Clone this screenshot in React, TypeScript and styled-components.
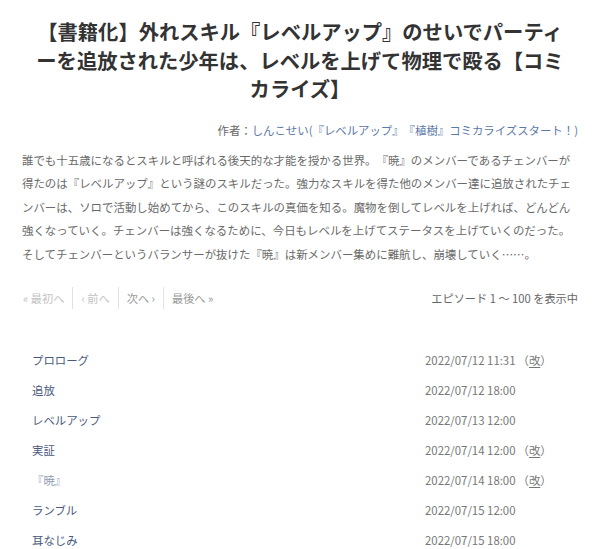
import React from 'react';
import styled, {createGlobalStyle} from "styled-components";

const GlobalStyle = createGlobalStyle`
    html, body {
        margin: 0;
        padding: 0;
        background: #fff;
    }
    body {
        font-family: "Noto Sans CJK JP", "Noto Sans", sans-serif;
        color: #666;
        text-spacing-trim: space-all;
    }
`;

interface Episode {
    title: string;
    date: string;
    revised?: boolean;
    visited?: boolean;
}

const episodes: Episode[] = [
    {title: "プロローグ", date: "2022/07/12 11:31", revised: true},
    {title: "追放", date: "2022/07/12 18:00"},
    {title: "レベルアップ", date: "2022/07/13 12:00"},
    {title: "実証", date: "2022/07/14 12:00", revised: true},
    {title: "『暁』", date: "2022/07/14 18:00", revised: true, visited: true},
    {title: "ランブル", date: "2022/07/15 12:00"},
    {title: "耳なじみ", date: "2022/07/15 18:00"},
];

const pager = [
    {label: "« 最初へ", active: false},
    {label: "‹ 前へ", active: false},
    {label: "次へ ›", active: true},
    {label: "最後へ »", active: true},
];

const Page = styled.div`
    width: 600px;
    box-sizing: border-box;
    padding: 17px 22px 0;
`;

const Title = styled.h1`
    margin: 0;
    padding: 0 10px;
    font-size: 20.3px;
    line-height: 28.5px;
    font-weight: 700;
    color: #333;
    text-align: center;
`;

const Author = styled.div`
    margin-top: 17px;
    text-align: right;
    font-size: 11.4px;
    line-height: 20px;
    color: #666;
`;

const AuthorLink = styled.a`
    color: #5b78a6;
    text-decoration: none;
`;

const Summary = styled.p`
    margin: 9px 0 0;
    font-size: 11.45px;
    line-height: 23.5px;
    color: #6a6a6a;
`;

const PagerBar = styled.div`
    margin-top: 21px;
    display: flex;
    align-items: center;
    justify-content: space-between;
`;

const PagerLinks = styled.div`
    display: flex;
    align-items: center;
`;

const PagerItem = styled.a<{$active: boolean}>`
    font-size: 11.2px;
    line-height: 22px;
    padding: 0 8px;
    color: ${p => p.$active ? "#999" : "#c2c2c2"};
    text-decoration: none;
    &:first-child {
        padding-left: 1px;
    }
    & + & {
        border-left: 1px solid #e2e2e2;
    }
`;

const Count = styled.div`
    font-size: 11.2px;
    line-height: 22px;
    color: #666;
`;

const List = styled.div`
    margin-top: 36px;
`;

const Row = styled.div`
    display: grid;
    grid-template-columns: 1fr 153px;
    align-items: center;
    height: 30px;
`;

const EpisodeTitle = styled.a<{$visited?: boolean}>`
    padding-left: 10px;
    font-size: 11.4px;
    color: ${p => p.$visited ? "#8d9ab3" : "#4a5a7c"};
    text-decoration: none;
`;

const Date = styled.div`
    font-size: 11.4px;
    color: #777;
`;

const Revised = styled.span`
    margin-left: 2px;
    & u {
        text-decoration: underline;
        text-underline-offset: 2px;
    }
`;

export default function App() {
    return (
        <Page>
            <GlobalStyle/>
            <Title>【書籍化】外れスキル『レベルアップ』のせいでパーティーを追放された少年は、レベルを上げて物理で殴る【コミカライズ】</Title>
            <Author>
                作者：<AuthorLink href="#">しんこせい(『レベルアップ』『植樹』コミカライズスタート！)</AuthorLink>
            </Author>
            <Summary>
                誰でも十五歳になるとスキルと呼ばれる後天的な才能を授かる世界。『暁』のメンバーであるチェンバーが得たのは『レベルアップ』という謎のスキルだった。強力なスキルを得た他のメンバー達に追放されたチェンバーは、ソロで活動し始めてから、このスキルの真価を知る。魔物を倒してレベルを上げれば、どんどん強くなっていく。チェンバーは強くなるために、今日もレベルを上げてステータスを上げていくのだった。<br/>
                そしてチェンバーというバランサーが抜けた『暁』は新メンバー集めに難航し、崩壊していく……。
            </Summary>
            <PagerBar>
                <PagerLinks>
                    {pager.map(item => (
                        <PagerItem key={item.label} href="#" $active={item.active}>{item.label}</PagerItem>
                    ))}
                </PagerLinks>
                <Count>エピソード 1 〜 100 を表示中</Count>
            </PagerBar>
            <List>
                {episodes.map(ep => (
                    <Row key={ep.date}>
                        <EpisodeTitle href="#" $visited={ep.visited}>{ep.title}</EpisodeTitle>
                        <Date>
                            {ep.date}
                            {ep.revised && <Revised>（<u>改</u>）</Revised>}
                        </Date>
                    </Row>
                ))}
            </List>
        </Page>
    );
}
